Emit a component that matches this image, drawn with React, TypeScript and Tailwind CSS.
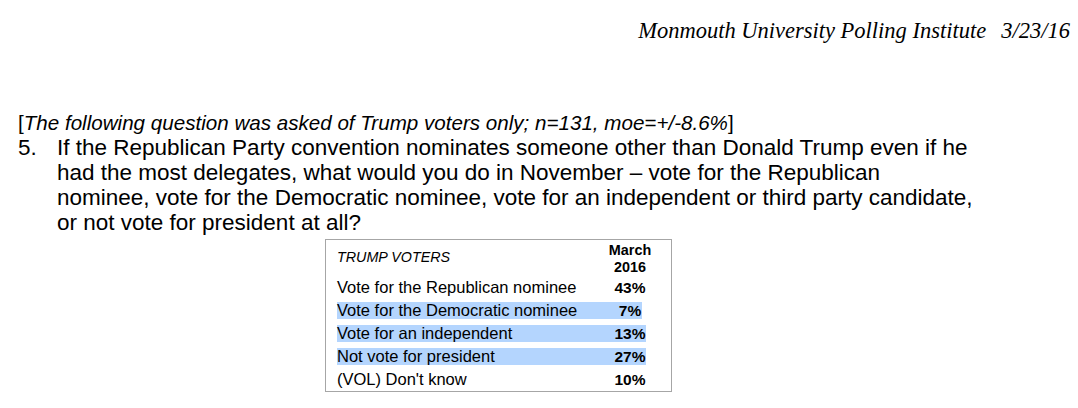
export default function App() {
  const rows = [
    { label: 'Vote for the Republican nominee', pct: '43%', hl: false, w: 'w-[309px]' },
    { label: 'Vote for the Democratic nominee', pct: '7%', hl: true, w: 'w-[305px]' },
    { label: 'Vote for an independent', pct: '13%', hl: true, w: 'w-[309px]' },
    { label: 'Not vote for president', pct: '27%', hl: true, w: 'w-[309px]' },
    { label: "(VOL) Don't know", pct: '10%', hl: false, w: 'w-[309px]' },
  ]

  return (
    <div className="w-[1078px] h-[408px] bg-white text-black overflow-hidden font-['Liberation_Sans',Arial,sans-serif]">
      {/* Header */}
      <div className="pt-[19px] pr-[8px] text-right font-['Liberation_Serif','Times_New_Roman',serif] italic text-[22.5px] leading-[24px]">
        Monmouth University Polling Institute<span className="text-[20px]">&nbsp;&nbsp;&nbsp;</span>3/23/16
      </div>

      {/* Question */}
      <div className="mt-[67px] pl-[18px] leading-[25px]">
        <p className="text-[20.6px]">
          [<span className="italic">The following question was asked of Trump voters only; n=131, moe=+/-8.6%</span>]
        </p>
        <div className="flex text-[22.5px]">
          <span className="w-[39px] shrink-0">5.</span>
          <p className="whitespace-nowrap">
            If the Republican Party convention nominates someone other than Donald Trump even if he
            <br />
            had the most delegates, what would you do in November – vote for the Republican
            <br />
            nominee, vote for the Democratic nominee, vote for an independent or third party candidate,
            <br />
            or not vote for president at all?
          </p>
        </div>
      </div>

      {/* Table */}
      <div className="ml-[325px] mt-[4px] w-[347px] border border-[#a6a6a6] pl-[11px]">
        <div className="flex h-[36px] items-center">
          <div className="w-[263px] text-[14.3px] italic">TRUMP VOTERS</div>
          <div className="w-[60px] text-center text-[14.4px] font-bold leading-[17px] pt-[2px]">
            March
            <br />
            2016
          </div>
        </div>
        {rows.map((r) => (
          <div key={r.label} className="py-[3px]">
            <div className={`flex h-[17px] items-center ${r.w} ${r.hl ? 'bg-[#b4d5fe]' : ''}`}>
              <div className="w-[272px] shrink-0 text-[16.5px] leading-[17px]">{r.label}</div>
              <div className="w-[42px] shrink-0 text-center text-[15.5px] font-bold leading-[17px]">{r.pct}</div>
            </div>
          </div>
        ))}
      </div>
    </div>
  )
}
